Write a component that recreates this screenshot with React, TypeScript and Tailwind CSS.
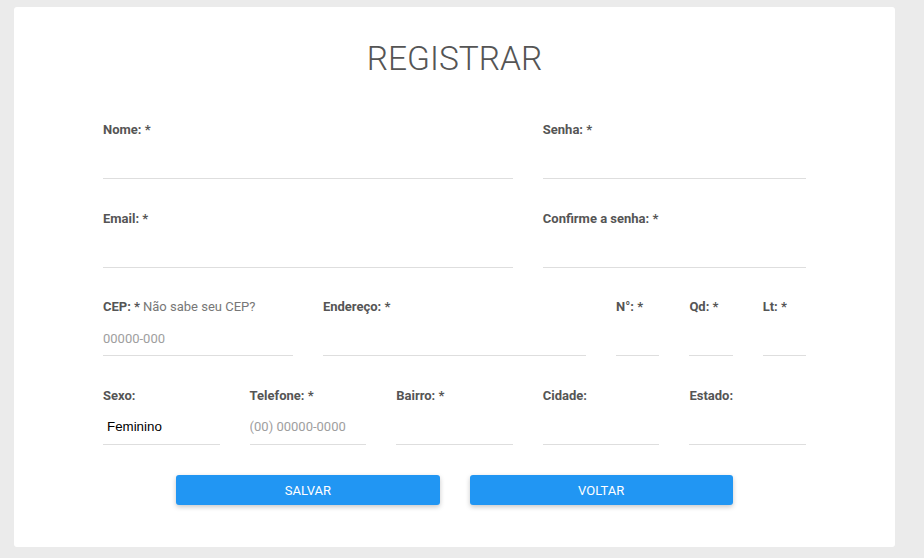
import React from 'react';

const labelCls = "block h-5 text-[13px] leading-5 font-bold text-[#555]";
const inputCls =
    "mt-1 block h-[35px] w-full border-b border-[#dedede] bg-transparent text-[13px] text-[#333] outline-none placeholder:text-[#9e9e9e]";

type FieldProps = {
    label: string;
    span: string;
    placeholder?: string;
    type?: string;
    extra?: React.ReactNode;
};

const Field = ({ label, span, placeholder, type = 'text', extra }: FieldProps) => (
    <div className={span}>
        <label className={labelCls}>
            {label}
            {extra}
        </label>
        <input type={type} placeholder={placeholder} className={inputCls} />
    </div>
);

const App = () => {
    return (
        <div className="min-h-screen bg-[#ebebeb] pt-[7px] pl-[14px]" style={{ fontFamily: 'Roboto, "Liberation Sans", sans-serif' }}>
            <div className="w-[881px] h-[540px] rounded-[3px] bg-white pt-[32px]">
                <h1 className="text-center text-[33.5px] leading-[40px] font-light text-[#555]">REGISTRAR</h1>

                <form className="mx-auto mt-[41px] w-[703px]">
                    <div className="grid grid-cols-10 gap-x-[30px] gap-y-[29.6px]">
                        <Field label="Nome: *" span="col-span-6" />
                        <Field label="Senha: *" span="col-span-4" type="password" />

                        <Field label="Email: *" span="col-span-6" type="email" />
                        <Field label="Confirme a senha: *" span="col-span-4" type="password" />

                        <Field
                            label="CEP: *"
                            span="col-span-3"
                            placeholder="00000-000"
                            extra={<span className="ml-[3px] font-normal text-[#777]">Não sabe seu CEP?</span>}
                        />
                        <Field label="Endereço: *" span="col-span-4" />
                        <Field label="N°: *" span="col-span-1" />
                        <Field label="Qd: *" span="col-span-1" />
                        <Field label="Lt: *" span="col-span-1" />

                        <div className="col-span-2">
                            <label className={labelCls}>Sexo:</label>
                            <select
                                className="mt-1 block h-[35px] w-full appearance-none border-b border-[#dedede] bg-transparent pl-1 text-[13.33px] text-black outline-none"
                                style={{ fontFamily: '"Liberation Sans", Arial, sans-serif' }}
                                defaultValue="F"
                            >
                                <option value="F">Feminino</option>
                                <option value="M">Masculino</option>
                            </select>
                        </div>
                        <Field label="Telefone: *" span="col-span-2" placeholder="(00) 00000-0000" />
                        <Field label="Bairro: *" span="col-span-2" />
                        <Field label="Cidade:" span="col-span-2" />
                        <Field label="Estado:" span="col-span-2" />
                    </div>

                    <div className="mt-[30.5px] grid grid-cols-10 gap-x-[30px]">
                        <button
                            type="submit"
                            className="col-span-4 col-start-2 h-[30px] rounded-[3px] bg-[#2196f3] text-[13px] uppercase text-white shadow-[0_2px_5px_rgba(0,0,0,0.22)]"
                        >
                            Salvar
                        </button>
                        <button
                            type="button"
                            className="col-span-4 col-start-6 h-[30px] rounded-[3px] bg-[#2196f3] text-[13px] uppercase text-white shadow-[0_2px_5px_rgba(0,0,0,0.22)]"
                        >
                            Voltar
                        </button>
                    </div>
                </form>
            </div>
        </div>
    );
};

export default App;
